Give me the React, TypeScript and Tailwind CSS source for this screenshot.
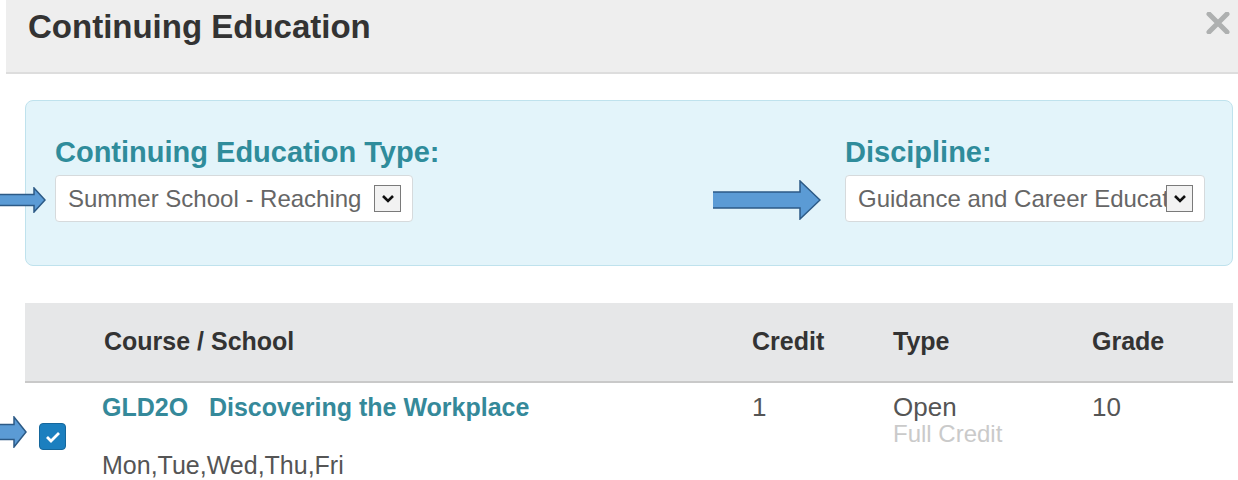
import React from 'react'

// Block arrow used as a pointer next to the form fields
function Arrow({ className, w, h, shaft, head }: { className: string; w: number; h: number; shaft: number; head: number }) {
  const top = (h - shaft) / 2
  const bottom = top + shaft
  const neck = w - head
  return (
    <svg className={className} width={w} height={h} viewBox={`0 0 ${w} ${h}`}>
      <polygon
        points={`-2,${top} ${neck},${top} ${neck},1 ${w - 1},${h / 2} ${neck},${h - 1} ${neck},${bottom} -2,${bottom}`}
        fill="#5b9bd5"
        stroke="#2c5a86"
        strokeWidth="1.5"
        strokeLinejoin="miter"
      />
    </svg>
  )
}

function Select({ value, width }: { value: string; width: string }) {
  return (
    <div className={`${width} h-[47px] flex items-center justify-between bg-white border border-[#d6dadc] rounded-[4px] pl-[12px] pr-[11px] overflow-hidden`}>
      <span className="text-[24px] text-[#666] whitespace-nowrap overflow-hidden">{value}</span>
      <span className="shrink-0 w-[27px] h-[27px] border border-[#7a7a7a] bg-[#f2f2f2] flex items-center justify-center -ml-[4px]">
        <svg width="14" height="10" viewBox="0 0 14 10">
          <path d="M2 2 L7 7 L12 2" fill="none" stroke="#111" strokeWidth="2.6" />
        </svg>
      </span>
    </div>
  )
}

export default function App() {
  return (
    <div className="relative w-[1238px] h-[480px] overflow-hidden bg-white font-['Liberation_Sans',Arial,sans-serif]">

      {/* Modal header */}
      <div className="ml-[6px] h-[74px] bg-[#eeeeee] border-b-2 border-[#dddddd] flex items-start justify-between pl-[22px] pr-[8px]">
        <h1 className="mt-[8px] text-[33px] leading-[37px] font-bold text-[#333]">Continuing Education</h1>
        <button className="mt-[12px]">
          <svg width="24" height="22" viewBox="0 0 24 22">
            <path d="M3 2 L21 20 M21 2 L3 20" stroke="#aeb0b0" strokeWidth="5" strokeLinecap="round" />
          </svg>
        </button>
      </div>

      {/* Filters */}
      <div className="ml-[25px] mr-[5px] mt-[26px] h-[166px] bg-[#e3f4fa] border border-[#bfe2ed] rounded-[8px] flex justify-between pt-[37px] pl-[29px] pr-[27px]">
        <div className="flex flex-col gap-[8px]">
          <label className="text-[29px] leading-[29px] font-bold text-[#2f8c9b]">Continuing Education Type:</label>
          <Select value="Summer School - Reaching" width="w-[358px]" />
        </div>
        <div className="flex flex-col gap-[8px]">
          <label className="text-[29px] leading-[29px] font-bold text-[#2f8c9b]">Discipline:</label>
          <Select value="Guidance and Career Education" width="w-[360px]" />
        </div>
      </div>

      {/* Course table */}
      <div className="ml-[25px] mr-[5px] mt-[37px]">
        <div className="grid grid-cols-[79px_648px_141px_199px_1fr] h-[80px] items-center bg-[#e6e7e8] border-b-2 border-[#c9c9c9] text-[25px] font-bold text-[#333]">
          <span />
          <span>Course / School</span>
          <span>Credit</span>
          <span>Type</span>
          <span>Grade</span>
        </div>
        <div className="grid grid-cols-[79px_648px_141px_199px_1fr] items-start pt-[12px] text-[26px] leading-[25px] text-[#555]">
          <div className="pl-[14px] pt-[28px]">
            <span className="w-[27px] h-[27px] rounded-[4px] bg-[#1b7fbf] border border-[#15679c] flex items-center justify-center">
              <svg width="16" height="12" viewBox="0 0 16 12">
                <path d="M2 6 L6 10 L14 2" fill="none" stroke="#fff" strokeWidth="2.8" />
              </svg>
            </span>
          </div>
          <div className="-ml-[2px]">
            <div className="text-[25px] font-bold text-[#35899a] whitespace-pre">GLD2O   Discovering the Workplace</div>
            <div className="mt-[33px] text-[25px]">Mon,Tue,Wed,Thu,Fri</div>
          </div>
          <div>1</div>
          <div className="flex flex-col">
            <span>Open</span>
            <span className="mt-[2px] text-[24px] leading-[24px] text-[#cacaca]">Full Credit</span>
          </div>
          <div>10</div>
        </div>
      </div>

      {/* Pointers */}
      <Arrow className="absolute left-0 top-[187px]" w={46} h={26} shaft={11} head={12} />
      <Arrow className="absolute left-[713px] top-[180px]" w={108} h={40} shaft={16} head={21} />
      <Arrow className="absolute left-0 top-[416px]" w={27} h={32} shaft={15} head={13} />
    </div>
  )
}
